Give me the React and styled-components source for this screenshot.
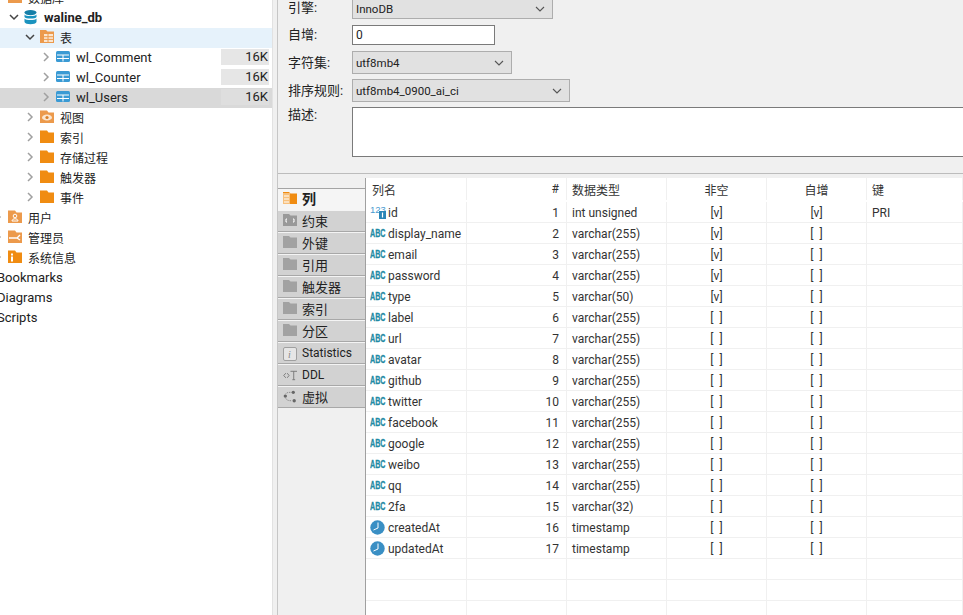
import React from 'react'
import styled, { createGlobalStyle } from 'styled-components'

const GlobalStyle = createGlobalStyle`
  html, body {
    margin: 0;
    height: 100%;
    overflow: hidden;
    background: #f0f0f0;
  }
  body {
    font-family: Roboto, "Noto Sans CJK SC", sans-serif;
    font-size: 12px;
    color: #222;
  }
`

const Page = styled.div`
  display: flex;
  width: 963px;
  height: 615px;
  overflow: hidden;
`

const Sidebar = styled.div`
  width: 272px;
  flex: none;
  background: #fff;
  overflow: hidden;
`

const Tree = styled.div`
  margin: -12px 0 0 -7px;
`

const TreeRow = styled.div`
  display: flex;
  align-items: center;
  height: 20px;
  box-sizing: border-box;
  padding: 0 0 2px ${p => p.$indent}px;
  background: ${p => p.$bg || 'transparent'};
  font-weight: ${p => (p.$bold ? 700 : 400)};
  white-space: nowrap;
`

const Arrow = styled.svg`
  width: 10px;
  height: 10px;
  flex: none;
  margin-right: 5px;
`

const IconSlot = styled.span`
  display: flex;
  flex: none;
  width: 15px;
  height: 14px;
  margin-right: 5px;
`

const TreeLabel = styled.span`
  flex: 1;
  font-size: ${p => (p.$latin ? '13px' : '12px')};
`

const SizeCell = styled.span`
  width: 48px;
  height: 16px;
  line-height: 16px;
  margin-right: 3px;
  padding-right: 1px;
  box-sizing: border-box;
  text-align: right;
  font-size: 13px;
  background: ${p => (p.$onGrey ? '#dedede' : '#e6e6e6')};
`

const Splitter = styled.div`
  width: 5px;
  flex: none;
  background: #f0f0f0;
  border-left: 1px solid #e2e2e2;
  box-sizing: border-box;
`

const Main = styled.div`
  flex: 1;
  min-width: 0;
  display: flex;
  flex-direction: column;
  overflow: hidden;
  border-left: 1px solid #c6c6c6;
`

const Form = styled.div`
  height: 176px;
  flex: none;
  margin-top: -3px;
  display: flex;
  flex-direction: column;
  border-bottom: 1px solid #bcbcbc;
`

const FormRow = styled.div`
  display: flex;
  align-items: ${p => (p.$top ? 'flex-start' : 'center')};
  height: ${p => p.$h}px;
  margin-bottom: ${p => p.$gap}px;
`

const FormLabel = styled.span`
  width: 74px;
  flex: none;
  padding-left: 10px;
  box-sizing: border-box;
  white-space: nowrap;
  font-size: 13px;
  line-height: 16px;
`

const Select = styled.div`
  display: flex;
  align-items: center;
  justify-content: space-between;
  width: ${p => p.$w}px;
  height: 100%;
  box-sizing: border-box;
  padding: 1px 7px 0 3px;
  font-size: 11.5px;
  background: #e1e1e1;
  border: 1px solid #adadad;
`

const TextInput = styled.div`
  width: ${p => p.$w}px;
  height: 100%;
  box-sizing: border-box;
  padding-left: 3px;
  display: flex;
  align-items: center;
  background: #fff;
  border: 1px solid #7a7a7a;
`

const TextArea = styled.div`
  flex: 1;
  height: 100%;
  box-sizing: border-box;
  background: #fff;
  border: 1px solid #7a7a7a;
  border-right: none;
`

const Lower = styled.div`
  flex: 1;
  display: flex;
  min-height: 0;
`

const TabList = styled.div`
  width: 87px;
  flex: none;
  padding-top: 14px;
  box-sizing: border-box;
`

const Tab = styled.div`
  display: flex;
  align-items: center;
  height: 22px;
  padding: 0 0 ${p => (p.$latin ? '0' : '2px')} 5px;
  background: ${p => (p.$active ? '#f5f5f5' : '#d2d2d2')};
  border-top: 1px solid ${p => (p.$active ? '#a4a4a4' : '#f4f4f4')};
  border-bottom: 1px solid ${p => (p.$active ? '#f5f5f5' : '#a8a8a8')};
  box-sizing: border-box;
  font-weight: ${p => (p.$active ? 700 : 400)};
  font-size: ${p => (p.$active ? '14px' : p.$latin ? '12px' : '13px')};
  white-space: nowrap;
`

const TabIcon = styled.span`
  display: flex;
  flex: none;
  width: 14px;
  height: 13px;
  margin-right: 5px;
`

const Table = styled.div`
  flex: 1;
  min-width: 0;
  background: #fff;
  border-left: 1px solid #a0a0a0;
  overflow: hidden;
  margin-top: 4px;
`

const Row = styled.div`
  display: grid;
  grid-template-columns: 101px 100px 100px 100px 100px 1fr;
  height: 21px;
  border-bottom: 1px solid #f0f0f0;
  box-sizing: border-box;
`

const HeaderRow = styled(Row)`
  height: 24px;
  border-bottom: none;
  padding-bottom: 2px;
`

const Cell = styled.div`
  display: flex;
  align-items: center;
  justify-content: ${p => p.$align || 'flex-start'};
  padding: ${p => (p.$head ? '0' : '1px')} ${p => (p.$align === 'flex-end' ? '7px' : '0')} 0 ${p => p.$pad ?? 5}px;
  border-right: 1px solid #f0f0f0;
  box-sizing: border-box;
  white-space: nowrap;
  overflow: ${p => (p.$open ? 'visible' : 'hidden')};
  color: #333;
`

const ColIcon = styled.span`
  display: flex;
  flex: none;
  width: 16px;
  height: 15px;
  margin: 0 2px;
`

const Chevron = () => (
  <svg width="10" height="6" viewBox="0 0 10 6" fill="none" stroke="#555" strokeWidth="1.1">
    <path d="M1 1l4 4 4-4" />
  </svg>
)

const TreeArrow = ({ open }) => (
  <Arrow viewBox="0 0 10 10" fill="none" stroke={open ? '#444' : '#a0a0a0'} strokeWidth="1.5">
    {open ? <path d="M1 3l4 4 4-4" /> : <path d="M3 1l4 4-4 4" />}
  </Arrow>
)

const Folder = ({ fill = '#f08c12', children }) => (
  <svg width="14" height="13" viewBox="0 0 14 13">
    <path d="M0 0.5h7l1.5 2H14V13H0z" fill={fill} />
    {children}
  </svg>
)

const TableIcon = () => (
  <svg width="14" height="13" viewBox="0 0 14 13">
    <rect x="0" y="1" width="14" height="11" rx="1.5" fill="#3a9ad4" />
    <path d="M1 5h12M1 8.5h12M7 5v6.5" stroke="#fff" strokeWidth="1" />
  </svg>
)

const TablesFolder = () => (
  <svg width="14" height="13" viewBox="0 0 14 13">
    <path d="M0 0h6l1.5 1.5H14V13H0z" fill="#ec9a4c" />
    <rect x="4" y="4" width="9" height="8" fill="#fbe6cf" />
    <path d="M4 6.7h9M4 9.4h9M8 4v8" stroke="#ec9a4c" strokeWidth="1" />
  </svg>
)

const DbIcon = () => (
  <svg width="13" height="15" viewBox="0 0 13 15">
    <ellipse cx="6.5" cy="2.6" rx="6" ry="2.6" fill="#157fa8" />
    <path d="M0.5 4.5c1 2 11 2 12 0v2.5c-1 2-11 2-12 0z" fill="#1a93bf" />
    <path d="M0.5 8.5c1 2 11 2 12 0v3.4c-1 3-11 3-12 0z" fill="#1a93bf" />
  </svg>
)

const AbcIcon = () => (
  <svg width="16" height="13" viewBox="0 0 16 13">
    <text
      transform="translate(0 10.5) scale(0.65 1)"
      fontFamily="Liberation Sans, sans-serif"
      fontSize="11"
      fontWeight="700"
      fill="#1f8aa4"
      stroke="#1f8aa4"
      strokeWidth="0.3"
    >
      ABC
    </text>
  </svg>
)

const NumIcon = () => (
  <svg width="16" height="16" viewBox="0 0 16 16">
    <text x="0" y="8" fontFamily="Liberation Sans, sans-serif" fontSize="9.5" fill="#4a9bd0">123</text>
    <rect x="9" y="6" width="7" height="8" fill="#2a86b8" />
    <path d="M12.5 7.5v5" stroke="#fff" strokeWidth="1.2" />
  </svg>
)

const ClockIcon = () => (
  <svg width="15" height="15" viewBox="0 0 15 15">
    <circle cx="7.5" cy="7.5" r="7.2" fill="#3a8fc4" />
    <path d="M8 2.5v5.5L3.5 10" stroke="#fff" strokeWidth="1" fill="none" />
  </svg>
)

const GrayFolder = () => (
  <svg width="14" height="12" viewBox="0 0 14 12">
    <path d="M0 0h6l1.5 1.5H14V12H0z" fill="#a2a2a2" />
  </svg>
)

const treeItems = [
  { indent: 0, label: '数据库', icon: <Folder fill="#ec9a4c" />, arrow: true, open: true },
  { indent: 16, label: 'waline_db', icon: <DbIcon />, arrow: true, open: true, bold: true, latin: true },
  { indent: 32, label: '表', icon: <TablesFolder />, arrow: true, open: true, bg: '#e6f2fb' },
  { indent: 48, label: 'wl_Comment', icon: <TableIcon />, arrow: true, size: '16K', latin: true },
  { indent: 48, label: 'wl_Counter', icon: <TableIcon />, arrow: true, size: '16K', latin: true },
  { indent: 48, label: 'wl_Users', icon: <TableIcon />, arrow: true, size: '16K', bg: '#d9d9d9', latin: true },
  {
    indent: 32,
    label: '视图',
    arrow: true,
    icon: (
      <Folder fill="#ec9a4c">
        <ellipse cx="7" cy="7.5" rx="5" ry="3" fill="#fbe6cf" />
        <circle cx="7" cy="7.5" r="1.6" fill="#d97f28" />
      </Folder>
    ),
  },
  { indent: 32, label: '索引', icon: <Folder />, arrow: true },
  { indent: 32, label: '存储过程', icon: <Folder />, arrow: true },
  { indent: 32, label: '触发器', icon: <Folder />, arrow: true },
  { indent: 32, label: '事件', icon: <Folder />, arrow: true },
  {
    indent: 0,
    label: '用户',
    arrow: true,
    icon: (
      <Folder fill="#ec9a4c">
        <circle cx="7" cy="6" r="1.8" fill="none" stroke="#fff" />
        <path d="M4 11c0-3 6-3 6 0z" fill="none" stroke="#fff" />
      </Folder>
    ),
  },
  {
    indent: 0,
    label: '管理员',
    arrow: true,
    icon: (
      <Folder fill="#ec9a4c">
        <path d="M1 8h8l3-3M9 8l3 2" stroke="#fff" strokeWidth="1.4" fill="none" />
      </Folder>
    ),
  },
  {
    indent: 0,
    label: '系统信息',
    arrow: true,
    icon: (
      <Folder>
        <rect x="3" y="3.5" width="2" height="2" fill="#fff" />
        <rect x="3" y="6.5" width="2" height="5" fill="#fff" />
      </Folder>
    ),
  },
  { indent: 4, label: 'Bookmarks', latin: true },
  { indent: 4, label: 'Diagrams', latin: true },
  { indent: 4, label: 'Scripts', latin: true },
]

const tabs = [
  { label: '列', active: true, icon: (
    <svg width="14" height="12" viewBox="0 0 14 12">
      <path d="M0 0h6l1.5 1.5H14V12H0z" fill="#f08c12" />
      <rect x="0" y="1" width="7" height="11" fill="#f7c07c" />
      <path d="M1 4h5M1 7h5M1 10h5" stroke="#fff" strokeWidth="1.2" />
    </svg>
  ) },
  { label: '约束', icon: (
    <svg width="14" height="12" viewBox="0 0 14 12">
      <path d="M0 0h6l1.5 1.5H14V12H0z" fill="#999" />
      <path d="M4 5H3v3h1M10 5h1v3h-1" stroke="#fff" fill="none" />
    </svg>
  ) },
  { label: '外键', icon: <GrayFolder /> },
  { label: '引用', icon: <GrayFolder /> },
  { label: '触发器', icon: <GrayFolder /> },
  { label: '索引', icon: <GrayFolder /> },
  { label: '分区', icon: <GrayFolder /> },
  { label: 'Statistics', latin: true, icon: (
    <svg width="14" height="14" viewBox="0 0 14 14">
      <rect x="0.5" y="0.5" width="13" height="13" rx="1.5" fill="#e6e6e6" stroke="#a0a0a0" />
      <text x="5" y="11" fontFamily="Liberation Serif, serif" fontStyle="italic" fontSize="10" fill="#888">i</text>
    </svg>
  ) },
  { label: 'DDL', latin: true, icon: (
    <svg width="15" height="13" viewBox="0 0 15 13">
      <path d="M3 4L0.8 6.5 3 9M4.5 4l2 2.5-2 2.5" stroke="#777" fill="none" />
      <path d="M8 2h7M11.5 2v9M10 11h3" stroke="#777" fill="none" />
    </svg>
  ) },
  { label: '虚拟', icon: (
    <svg width="15" height="14" viewBox="0 0 15 14">
      <circle cx="11" cy="2" r="1.8" fill="#666" />
      <circle cx="2.5" cy="6" r="1.8" fill="#666" />
      <circle cx="12" cy="11" r="1.8" fill="#666" />
      <path d="M8 2C5 2 3.5 2.5 2.5 4M3 8.5c1 2 3 2.5 6 2.5" stroke="#888" fill="none" strokeDasharray="1.5 1" />
    </svg>
  ) },
]

const yes = '[v]'
const no = '[\u00a0\u00a0]'

const columns = [
  { name: 'id', type: 'int unsigned', notNull: yes, auto: yes, key: 'PRI', icon: 'num' },
  { name: 'display_name', type: 'varchar(255)', notNull: yes },
  { name: 'email', type: 'varchar(255)', notNull: yes },
  { name: 'password', type: 'varchar(255)', notNull: yes },
  { name: 'type', type: 'varchar(50)', notNull: yes },
  { name: 'label', type: 'varchar(255)' },
  { name: 'url', type: 'varchar(255)' },
  { name: 'avatar', type: 'varchar(255)' },
  { name: 'github', type: 'varchar(255)' },
  { name: 'twitter', type: 'varchar(255)' },
  { name: 'facebook', type: 'varchar(255)' },
  { name: 'google', type: 'varchar(255)' },
  { name: 'weibo', type: 'varchar(255)' },
  { name: 'qq', type: 'varchar(255)' },
  { name: '2fa', type: 'varchar(32)' },
  { name: 'createdAt', type: 'timestamp', icon: 'clock' },
  { name: 'updatedAt', type: 'timestamp', icon: 'clock' },
]

const colIcon = kind => {
  if (kind === 'num') return <NumIcon />
  if (kind === 'clock') return <ClockIcon />
  return <AbcIcon />
}

export default function App() {
  return (
    <>
      <GlobalStyle />
      <Page>
        <Sidebar>
          <Tree>
            {treeItems.map(item => (
              <TreeRow key={item.label} $indent={item.indent} $bg={item.bg} $bold={item.bold}>
                {item.arrow && <TreeArrow open={item.open} />}
                {item.icon && <IconSlot>{item.icon}</IconSlot>}
                <TreeLabel $latin={item.latin}>{item.label}</TreeLabel>
                {item.size && <SizeCell $onGrey={!!item.bg}>{item.size}</SizeCell>}
              </TreeRow>
            ))}
          </Tree>
        </Sidebar>
        <Splitter />
        <Main>
          <Form>
            <FormRow $h={22} $gap={6}>
              <FormLabel>引擎:</FormLabel>
              <Select $w={201}>InnoDB<Chevron /></Select>
            </FormRow>
            <FormRow $h={20} $gap={6}>
              <FormLabel>自增:</FormLabel>
              <TextInput $w={143}>0</TextInput>
            </FormRow>
            <FormRow $h={23} $gap={5}>
              <FormLabel>字符集:</FormLabel>
              <Select $w={160}>utf8mb4<Chevron /></Select>
            </FormRow>
            <FormRow $h={23} $gap={5}>
              <FormLabel>排序规则:</FormLabel>
              <Select $w={218}>utf8mb4_0900_ai_ci<Chevron /></Select>
            </FormRow>
            <FormRow $top $h={50} $gap={0}>
              <FormLabel>描述:</FormLabel>
              <TextArea />
            </FormRow>
          </Form>
          <Lower>
            <TabList>
              {tabs.map(tab => (
                <Tab key={tab.label} $active={tab.active} $latin={tab.latin}>
                  <TabIcon>{tab.icon}</TabIcon>
                  {tab.label}
                </Tab>
              ))}
            </TabList>
            <Table>
              <HeaderRow>
                <Cell $head $pad={6}>列名</Cell>
                <Cell $head $align="flex-end">#</Cell>
                <Cell $head>数据类型</Cell>
                <Cell $head $align="center" $pad={0}>非空</Cell>
                <Cell $head $align="center" $pad={0}>自增</Cell>
                <Cell $head>键</Cell>
              </HeaderRow>
              {columns.map((col, i) => (
                <Row key={col.name}>
                  <Cell $pad={2} $open>
                    <ColIcon>{colIcon(col.icon)}</ColIcon>
                    {col.name}
                  </Cell>
                  <Cell $align="flex-end">{i + 1}</Cell>
                  <Cell>{col.type}</Cell>
                  <Cell $align="center" $pad={0}>{col.notNull || no}</Cell>
                  <Cell $align="center" $pad={0}>{col.auto || no}</Cell>
                  <Cell>{col.key}</Cell>
                </Row>
              ))}
              {[0, 1, 2].map(i => (
                <Row key={i}>
                  <Cell /><Cell /><Cell /><Cell /><Cell /><Cell />
                </Row>
              ))}
            </Table>
          </Lower>
        </Main>
      </Page>
    </>
  )
}
